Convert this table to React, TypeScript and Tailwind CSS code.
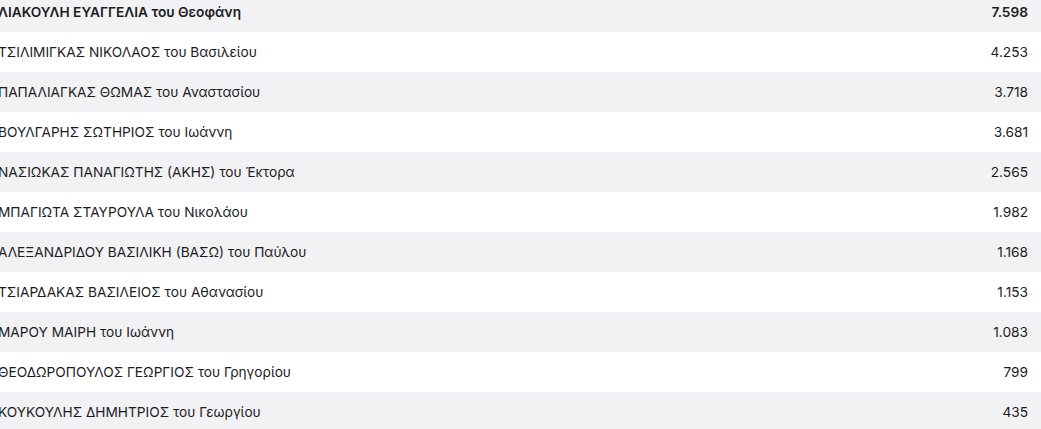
import React from "react";

const rows: [string, string][] = [
  ["ΛΙΑΚΟΥΛΗ ΕΥΑΓΓΕΛΙΑ του Θεοφάνη", "7.598"],
  ["ΤΣΙΛΙΜΙΓΚΑΣ ΝΙΚΟΛΑΟΣ του Βασιλείου", "4.253"],
  ["ΠΑΠΑΛΙΑΓΚΑΣ ΘΩΜΑΣ του Αναστασίου", "3.718"],
  ["ΒΟΥΛΓΑΡΗΣ ΣΩΤΗΡΙΟΣ του Ιωάννη", "3.681"],
  ["ΝΑΣΙΩΚΑΣ ΠΑΝΑΓΙΩΤΗΣ (ΑΚΗΣ) του Έκτορα", "2.565"],
  ["ΜΠΑΓΙΩΤΑ ΣΤΑΥΡΟΥΛΑ του Νικολάου", "1.982"],
  ["ΑΛΕΞΑΝΔΡΙΔΟΥ ΒΑΣΙΛΙΚΗ (ΒΑΣΩ) του Παύλου", "1.168"],
  ["ΤΣΙΑΡΔΑΚΑΣ ΒΑΣΙΛΕΙΟΣ του Αθανασίου", "1.153"],
  ["ΜΑΡΟΥ ΜΑΙΡΗ του Ιωάννη", "1.083"],
  ["ΘΕΟΔΩΡΟΠΟΥΛΟΣ ΓΕΩΡΓΙΟΣ του Γρηγορίου", "799"],
  ["ΚΟΥΚΟΥΛΗΣ ΔΗΜΗΤΡΙΟΣ του Γεωργίου", "435"],
];

export default function App() {
  return (
    <div className="w-[1041px] h-[429px] overflow-hidden bg-white font-['Inter',sans-serif] text-[13.7px] text-[#1c1c1e]">
      <div className="-mt-[8px] -ml-[8px] w-[1049px]">
        {rows.map(([name, num], i) => (
          <div
            key={i}
            className={`flex h-[40px] items-center justify-between pl-[6px] pr-[13px] ${
              i % 2 === 0 ? "bg-[#f2f2f4]" : "bg-white"
            } ${i === 0 ? "font-semibold" : ""}`}
          >
            <span>{name}</span>
            <span>{num}</span>
          </div>
        ))}
      </div>
    </div>
  );
}
